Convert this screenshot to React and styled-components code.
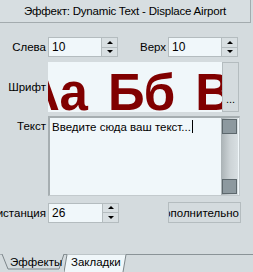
import React from "react";
import styled, { createGlobalStyle } from "styled-components";

const Global = createGlobalStyle`
  html, body { margin: 0; padding: 0; background: #d4dbde; }
  body { font-family: "Liberation Sans", Arial, sans-serif; font-size: 11px; color: #000; }
  #root { width: 253px; height: 272px; overflow: hidden; }
`;

const Window = styled.div`
  width: 253px;
  height: 272px;
  display: flex;
  flex-direction: column;
  background: #d4dbde;
  overflow: hidden;
`;

const TitleBar = styled.div`
  width: 251px;
  height: 23px;
  box-sizing: border-box;
  border-right: 1px solid #a3abae;
  border-bottom: 1px solid #a3abae;
  background: #d7dee1;
  display: flex;
  align-items: center;
  justify-content: center;
  font-size: 11.5px;
  letter-spacing: -0.2px;
  white-space: nowrap;
`;

const Panel = styled.div`
  display: flex;
  flex-direction: column;
  padding-top: 14px;
  flex: 1;
`;

const Row = styled.div`
  display: flex;
  align-items: ${(p) => p.$align || "center"};
  height: ${(p) => p.$h}px;
  margin-top: ${(p) => p.$mt || 0}px;
`;

const Label = styled.div`
  width: ${(p) => p.$w || 48}px;
  flex: none;
  display: flex;
  justify-content: flex-end;
  overflow: hidden;
  white-space: nowrap;
  padding-right: 2px;
  box-sizing: border-box;
  font-size: 11.5px;
  padding-top: ${(p) => p.$pt || 0}px;
`;

const Input = styled.div`
  width: 54px;
  height: 20px;
  box-sizing: border-box;
  background: #f0f7fa;
  border: 1px solid #b4bcbf;
  border-right: none;
  display: flex;
  align-items: center;
  padding-left: 3px;
  font-size: 12px;
`;

const Spin = styled.div`
  width: 17px;
  height: 20px;
  display: flex;
  flex-direction: column;
  box-sizing: border-box;
  border: 1px solid #b4bcbf;
  background: #d4dbde;
`;

const SpinBtn = styled.div`
  flex: 1;
  display: flex;
  align-items: center;
  justify-content: center;
  background: #d8dfe2;
  border-top: ${(p) => (p.$down ? "1px solid #b4bcbf" : "none")};
`;

const Tri = styled.div`
  width: 0;
  height: 0;
  border-left: 3.5px solid transparent;
  border-right: 3.5px solid transparent;
  ${(p) => (p.$down ? "border-top: 3px solid #000;" : "border-bottom: 3px solid #000;")}
`;

const Spacer = styled.div`
  flex: 1;
`;

const Preview = styled.div`
  width: 174px;
  height: 50px;
  box-sizing: border-box;
  background: #f0f7fa;
  overflow: hidden;
  white-space: nowrap;
  font-family: "Liberation Sans", Arial, sans-serif;
  font-weight: bold;
  font-size: 51px;
  line-height: 50px;
  color: #800000;
  letter-spacing: -1px;
  word-spacing: 8px;
  text-indent: -25px;
  padding-top: 6px;
`;

const DotsBtn = styled.div`
  width: 17px;
  height: 50px;
  box-sizing: border-box;
  border: 1px solid #b4bcbf;
  background: #d4dbde;
  display: flex;
  align-items: flex-end;
  justify-content: center;
  padding-bottom: 6px;
  font-size: 11px;
  line-height: 11px;
`;

const TextArea = styled.div`
  width: 192px;
  height: 80px;
  box-sizing: border-box;
  background: #f0f7fa;
  border-top: 2px solid #a6aeb1;
  border-left: 2px solid #a6aeb1;
  border-right: 1px solid #c3cacd;
  border-bottom: 1px solid #c3cacd;
  display: flex;
`;

const TextContent = styled.div`
  flex: 1;
  padding: 2px 0 0 2px;
  font-size: 11.5px;
  line-height: 13px;
  white-space: nowrap;
`;

const Caret = styled.span`
  display: inline-block;
  width: 1px;
  height: 13px;
  background: #000;
  vertical-align: -2px;
  margin-left: 1px;
`;

const ScrollBar = styled.div`
  width: 17px;
  display: flex;
  flex-direction: column;
  justify-content: space-between;
  align-items: center;
  padding: 1px 0 1px;
  background: linear-gradient(to right, #aab2b5, #cdd4d7 55%, #d8dfe2);
  margin-right: 1px;
`;

const ScrollThumb = styled.div`
  width: 15px;
  height: 15px;
  box-sizing: border-box;
  background: #8d999f;
  border: 1px solid #5d686d;
`;

const Button = styled.div`
  width: 73px;
  height: 21px;
  box-sizing: border-box;
  border: 1px solid #b4bcbf;
  background: #d4dbde;
  display: flex;
  align-items: center;
  justify-content: flex-end;
  overflow: hidden;
  white-space: nowrap;
  padding-right: 1px;
  font-size: 11.5px;
`;

const TabBar = styled.div`
  margin-top: auto;
  height: 18px;
  display: flex;
  position: relative;
`;

const TabLine = styled.div`
  position: absolute;
  left: 64px;
  right: 0;
  top: 0;
  height: 1px;
  background: #8a9397;
`;

const Tab = styled.div`
  position: relative;
  width: ${(p) => p.$w}px;
  height: 18px;
  display: flex;
  align-items: flex-start;
  padding-left: ${(p) => p.$pl}px;
  padding-top: 2px;
  box-sizing: border-box;
  font-size: 11.5px;
  white-space: nowrap;
  & > svg {
    position: absolute;
    left: 0;
    top: 0;
  }
  & > span {
    position: relative;
  }
`;

function Spinner() {
  return (
    <Spin>
      <SpinBtn>
        <Tri />
      </SpinBtn>
      <SpinBtn $down>
        <Tri $down />
      </SpinBtn>
    </Spin>
  );
}

export default function App() {
  return (
    <Window>
      <Global />
      <TitleBar>Эффект: Dynamic Text - Displace Airport</TitleBar>
      <Panel>
        <Row $h={20}>
          <Label>Слева</Label>
          <Input>10</Input>
          <Spinner />
          <Spacer />
          <Label $w={50}>Верх</Label>
          <Input>10</Input>
          <Spinner />
          <div style={{ width: 15 }} />
        </Row>
        <Row $h={50} $mt={5}>
          <Label>Шрифт</Label>
          <Preview>Аа Бб Вв</Preview>
          <DotsBtn>...</DotsBtn>
        </Row>
        <Row $h={80} $mt={4} $align="flex-start">
          <Label $pt={4}>Текст</Label>
          <TextArea>
            <TextContent>
              Введите сюда ваш текст...
              <Caret />
            </TextContent>
            <ScrollBar>
              <ScrollThumb />
              <ScrollThumb />
            </ScrollBar>
          </TextArea>
        </Row>
        <Row $h={21} $mt={6}>
          <Label>Дистанция</Label>
          <Input>26</Input>
          <Spinner />
          <Spacer />
          <Button>Дополнительно</Button>
          <div style={{ width: 12 }} />
        </Row>
        <TabBar>
          <TabLine />
          <Tab $w={64} $pl={10}>
            <svg width="66" height="18">
              <path d="M0,0 L2,0 L8,15 L59,15 L64,0" fill="#d4dbde" stroke="#7d868a" strokeWidth="1" />
            </svg>
            <span>Эффекты</span>
          </Tab>
          <Tab $w={64} $pl={7}>
            <svg width="64" height="18">
              <path d="M0,18 L3,0.5 L62,0.5 L59,18 Z" fill="#f0f7fa" stroke="none" />
              <path d="M0,18 L3,0.5 M62,0.5 L59,18" fill="none" stroke="#7d868a" strokeWidth="1" />
            </svg>
            <span>Закладки</span>
          </Tab>
        </TabBar>
      </Panel>
    </Window>
  );
}
